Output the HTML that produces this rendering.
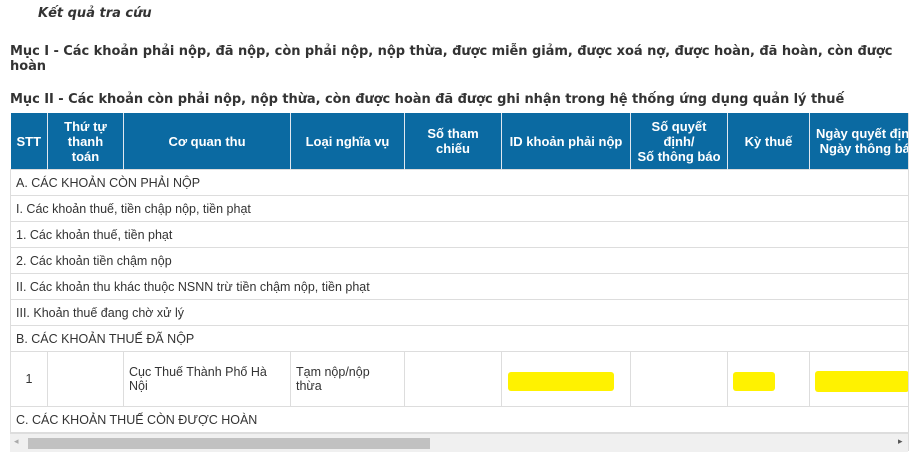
<!DOCTYPE html>
<html><head><meta charset="utf-8"><style>
body{margin:0;background:#fff;width:919px;height:463px;overflow:hidden;font-family:"Liberation Sans",Arial,sans-serif;color:#222;position:relative}
.t{position:absolute;white-space:nowrap}
h1{position:absolute;left:38px;top:6px;margin:0;font:italic bold 13px "DejaVu Sans",sans-serif;color:#333}
.m{position:absolute;left:10px;margin:0;font:bold 13px "DejaVu Sans",sans-serif;color:#333;line-height:15px;letter-spacing:-0.05px}
.wrap{position:absolute;left:10px;top:113px;width:898px;height:338px;overflow:hidden;border-right:1px solid #ddd}
table{border-collapse:collapse;table-layout:fixed;width:960px;font-size:13px}
th{background:#0b6aa2;color:#fff;font-weight:bold;height:56px;border-right:1px solid #e0e8f0;padding:0 2px;line-height:15px;font-size:13px}
td{border:1px solid #ddd;height:25px;padding:0 5px;color:#333;font-size:12.5px}
.y{display:inline-block;background:#fff200;height:19px;border-radius:3px;vertical-align:middle;margin-top:4px}
.sb{position:absolute;left:10px;top:433px;width:898px;height:18px;background:#f0f0f0;border-top:1px solid #ddd}
.th{position:absolute;left:18px;top:4px;width:402px;height:11px;background:#c1c1c1}
</style></head><body>
<h1>Kết quả tra cứu</h1>
<p class="m" style="top:44px">Mục I - Các khoản phải nộp, đã nộp, còn phải nộp, nộp thừa, được miễn giảm, được xoá nợ, được hoàn, đã hoàn, còn được<br>hoàn</p>
<p class="m" style="top:92px">Mục II - Các khoản còn phải nộp, nộp thừa, còn được hoàn đã được ghi nhận trong hệ thống ứng dụng quản lý thuế</p>
<div class="wrap"><table>
<colgroup><col style="width:37px"><col style="width:76px"><col style="width:167px"><col style="width:114px"><col style="width:97px"><col style="width:129px"><col style="width:97px"><col style="width:82px"><col style="width:161px"></colgroup>
<tr><th>STT</th><th>Thứ tự<br>thanh<br>toán</th><th>Cơ quan thu</th><th>Loại nghĩa vụ</th><th>Số tham<br>chiếu</th><th>ID khoản phải nộp</th><th>Số quyết<br>định/<br>Số thông báo</th><th>Kỳ thuế</th><th style="text-align:left;padding-left:6px">Ngày quyết định/<br>&nbsp;Ngày thông báo</th></tr>
<tr><td colspan="9">A. CÁC KHOẢN CÒN PHẢI NỘP</td></tr>
<tr><td colspan="9">I. Các khoản thuế, tiền chập nộp, tiền phạt</td></tr>
<tr><td colspan="9">1. Các khoản thuế, tiền phạt</td></tr>
<tr><td colspan="9">2. Các khoản tiền chậm nộp</td></tr>
<tr><td colspan="9">II. Các khoản thu khác thuộc NSNN trừ tiền chậm nộp, tiền phạt</td></tr>
<tr><td colspan="9">III. Khoản thuế đang chờ xử lý</td></tr>
<tr><td colspan="9">B. CÁC KHOẢN THUẾ ĐÃ NỘP</td></tr>
<tr><td style="height:54px;text-align:center">1</td><td></td><td>Cục Thuế Thành Phố Hà<br>Nội</td><td>Tạm nộp/nộp<br>thừa</td><td></td><td><span class="y" style="width:106px;margin-left:1px"></span></td><td></td><td><span class="y" style="width:42px"></span></td><td><span class="y" style="width:94px;height:21px"></span></td></tr>
<tr><td colspan="9">C. CÁC KHOẢN THUẾ CÒN ĐƯỢC HOÀN</td></tr>
</table></div>
<div class="sb"><div class="th"></div><span class="t" style="left:4px;top:2px;font-size:9px;color:#aaa">◂</span><span class="t" style="left:888px;top:2px;font-size:9px;color:#555">▸</span></div>
</body></html>
